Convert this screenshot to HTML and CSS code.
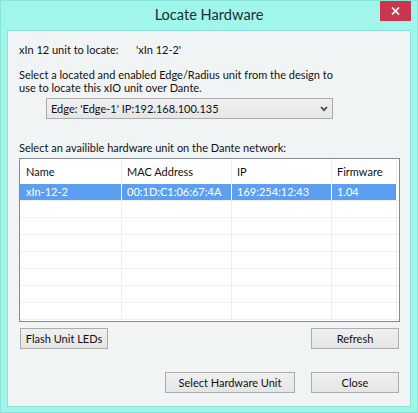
FILE: index.html
```html
<!DOCTYPE html>
<html>
<head>
<meta charset="utf-8">
<title>Locate Hardware</title>
<link rel="stylesheet" href="styles.css">
</head>
<body>
<div class="window">
  <div class="titlebar">
    <span class="title">Locate Hardware</span>
    <button class="close-btn" aria-label="Close">
      <svg width="9" height="8" viewBox="0 0 9 8"><path d="M1 0.5 L8 7.5 M8 0.5 L1 7.5" stroke="#fff" stroke-width="1.7" fill="none"/></svg>
    </button>
  </div>
  <div class="client">
    <div class="unit-line">
      <span class="unit-label">xIn 12 unit to locate:</span>
      <span class="unit-value">'xIn 12-2'</span>
    </div>
    <p class="instr">Select a located and enabled Edge/Radius unit from the design to<br>use to locate this xIO unit over Dante.</p>
    <div class="combo">
      <span class="combo-text">Edge: 'Edge-1' IP:192.168.100.135</span>
      <svg class="chev" width="8" height="6" viewBox="0 0 8 6"><path d="M1 1 L4 4.2 L7 1" stroke="#4a4a4a" stroke-width="1.8" fill="none"/></svg>
    </div>
    <div class="list-label">Select an availible hardware unit on the Dante network:</div>
    <div class="lv">
      <div class="lv-head">
        <div class="c c1">Name</div><div class="c c2">MAC Address</div><div class="c c3">IP</div><div class="c c4">Firmware</div>
      </div>
      <div class="lv-body">
        <div class="row sel"><div class="c c1">xIn-12-2</div><div class="c c2">00:1D:C1:06:67:4A</div><div class="c c3">169:254:12:43</div><div class="c c4">1.04</div></div>
        <div class="row"><div class="c c1"></div><div class="c c2"></div><div class="c c3"></div><div class="c c4"></div></div>
        <div class="row"><div class="c c1"></div><div class="c c2"></div><div class="c c3"></div><div class="c c4"></div></div>
        <div class="row"><div class="c c1"></div><div class="c c2"></div><div class="c c3"></div><div class="c c4"></div></div>
        <div class="row"><div class="c c1"></div><div class="c c2"></div><div class="c c3"></div><div class="c c4"></div></div>
        <div class="row"><div class="c c1"></div><div class="c c2"></div><div class="c c3"></div><div class="c c4"></div></div>
        <div class="row"><div class="c c1"></div><div class="c c2"></div><div class="c c3"></div><div class="c c4"></div></div>
        <div class="row"><div class="c c1"></div><div class="c c2"></div><div class="c c3"></div><div class="c c4"></div></div>
      </div>
    </div>
    <div class="btn-row top-row">
      <button class="btn">Flash Unit LEDs</button>
      <button class="btn">Refresh</button>
    </div>
    <div class="btn-row bottom-row">
      <button class="btn wide">Select Hardware Unit</button>
      <button class="btn">Close</button>
    </div>
  </div>
</div>
</body>
</html>
```
FILE: styles.css
```css
* { box-sizing: border-box; }
html, body { margin: 0; padding: 0; }
body {
  font-family: "Lato", "Liberation Sans", sans-serif;
  font-size: 11px;
  color: #111;
  background: #a0f6ea;
}
.window {
  position: relative;
  width: 418px;
  height: 413px;
  background: #a0f6ea;
  border: 1px solid #86e6d8;
  display: flex;
  flex-direction: column;
}
.titlebar {
  height: 30px;
  padding-bottom: 2px;
  text-align: center;
  line-height: 28px;
}
.title {
  font-size: 14.6px;
  color: #1c302e;
}
.close-btn {
  position: absolute;
  top: 0;
  right: 6px;
  width: 31px;
  height: 20px;
  border: none;
  padding: 0;
  background: #c8374f;
  display: flex;
  align-items: center;
  justify-content: center;
}
.client {
  margin: 0 7px 6px 7px;
  flex: 1;
  background: #f1f4f4;
  box-shadow: 0 0 0 1px #8be4d6;
  padding: 12px 0 0 11px;
  display: flex;
  flex-direction: column;
  align-items: flex-start;
}
.unit-line {
  line-height: 13px;
  height: 13px;
  display: flex;
}
.unit-label { width: 117px; }
.instr {
  margin: 12px 0 0 0;
  line-height: 13.2px;
}
.combo {
  margin: 3.6px 0 0 27px;
  width: 287px;
  height: 21px;
  border: 1px solid #ababab;
  background: linear-gradient(#f0f0f0, #e6e6e6);
  display: flex;
  align-items: center;
  justify-content: space-between;
  padding: 0 4px 0 4px;
  line-height: 19px;
}
.chev { margin-top: 1px; }
.list-label {
  margin-top: 22px;
  line-height: 13px;
  height: 13px;
}
.lv {
  margin-top: 4px;
  width: 381px;
  height: 164px;
  border: 1px solid #838a92;
  background: #fff;
  overflow: hidden;
}
.lv-head {
  display: flex;
  height: 25px;
  line-height: 25px;
}
.lv-body {
  height: 137px;
  overflow: hidden;
}
.row {
  display: flex;
  height: 17px;
  line-height: 16px;
  border-bottom: 1px solid #f0f0f0;
}
.c {
  height: 100%;
  border-right: 1px solid #eeeeee;
  padding-left: 5px;
  white-space: nowrap;
  overflow: hidden;
}
.c1 { width: 102px; padding-left: 6px; }
.c2 { width: 110px; }
.c3 { width: 100px; }
.c4 { width: 65px; }
.row .c { height: 16px; }
.row.sel .c {
  background: #5c9ff0;
  color: #fff;
  border-right-color: #ffffff;
}
.btn-row {
  display: flex;
  width: 380px;
}
.top-row {
  margin-top: 6px;
  padding-left: 1px;
  justify-content: space-between;
}
.bottom-row {
  margin-top: 23px;
  justify-content: flex-end;
  gap: 16px;
}
.btn {
  width: 88px;
  height: 21px;
  padding: 0;
  border: 1px solid #acacac;
  background: linear-gradient(#f0f0f0, #e5e5e5);
  font-family: "Lato", "Liberation Sans", sans-serif;
  font-size: 11px;
  color: #111;
  line-height: 19px;
}
.btn.wide { width: 130px; }
```
